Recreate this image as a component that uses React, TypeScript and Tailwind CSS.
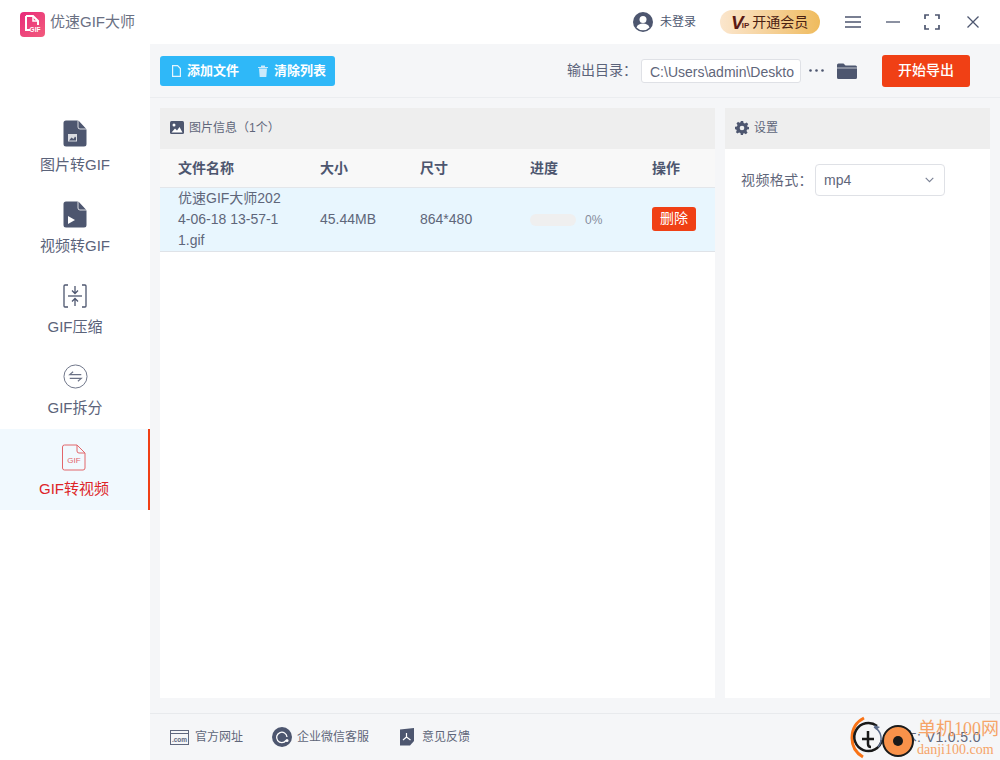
import { ReactNode } from "react";

const font = { fontFamily: '"Liberation Sans", "Noto Sans CJK SC", sans-serif' };

function FileShape({ children }: { children?: ReactNode }) {
    return (
        <svg width="24" height="27" viewBox="0 0 24 27">
            <path
                d="M3 0.5h11.5c.6 0 1 .2 1.4.6l7 7.4c.4.4.6.9.6 1.4V24a2.500 2.500 0 0 1-2.500 2.500H3A2.500 2.500 0 0 1 .5 24V3A2.500 2.500 0 0 1 3 .5z"
                fill="#4d566f"
            />
            <path d="M15 0.500v6.500a2 2 0 0 0 2 2h6.500" fill="none" stroke="#fff" strokeWidth="0.8" />
            {children}
        </svg>
    );
}

function ImageFileIcon() {
    return (
        <FileShape>
            <rect x="5" y="14" width="9" height="7.500" fill="#d9dbe1" />
            <path d="M6 20.500l2.500-3 2 1.500 1.500-2.500 1 1v3z" fill="#4d566f" />
        </FileShape>
    );
}

function VideoFileIcon() {
    return (
        <FileShape>
            <path d="M5 15l7 4-7 4z" fill="#fff" />
        </FileShape>
    );
}

function CompressIcon() {
    return (
        <svg width="24" height="24" viewBox="0 0 24 24" fill="none" stroke="#4d566f" strokeWidth="1.300">
            <path d="M5 1H2a1 1 0 0 0-1 1v20a1 1 0 0 0 1 1h3M19 1h3a1 1 0 0 1 1 1v20a1 1 0 0 1-1 1h-3" />
            <path d="M5 12h14" />
            <path d="M12 2v7M9 6.500l3 3 3-3M12 22v-7M9 17.500l3-3 3 3" />
        </svg>
    );
}

function SplitIcon() {
    return (
        <svg width="25" height="25" viewBox="0 0 26 26" fill="none" stroke="#6b7286" strokeWidth="1">
            <circle cx="13" cy="13" r="12" />
            <path d="M19 11H7l3.500-3M7 15h12l-3.500 3" strokeWidth="1.200" />
        </svg>
    );
}

function GifFileIcon() {
    return (
        <svg width="24" height="27" viewBox="0 0 24 27">
            <path
                d="M2.500 1h12.500l8 8v15a2 2 0 0 1-2 2H2.500a2 2 0 0 1-2-2V3a2 2 0 0 1 2-2z"
                fill="none"
                stroke="#e2666a"
                strokeWidth="1"
            />
            <path d="M15 1v6a2 2 0 0 0 2 2h6" fill="none" stroke="#e2666a" strokeWidth="1" />
            <text x="12" y="18.500" textAnchor="middle" fontSize="8" fill="#e2666a" style={font}>
                GIF
            </text>
        </svg>
    );
}

function AppLogo() {
    return (
        <div className="w-[25px] h-[25px] rounded-[4px] bg-gradient-to-br from-[#e8267a] to-[#f25a7c] flex items-center justify-center">
            <svg width="19" height="21" viewBox="0 0 19 21" fill="none">
                <path d="M3 2h7l5 5v4M3 2v14h4" stroke="#fff" strokeWidth="2" />
                <path d="M10 2v5h5" stroke="#fff" strokeWidth="1.500" />
                <text x="12" y="17.500" textAnchor="middle" fontSize="6.500" fontWeight="700" fill="#fff" style={font}>
                    GIF
                </text>
            </svg>
        </div>
    );
}

function SideItem({ label, icon, active }: { label: string; icon: ReactNode; active?: boolean }) {
    return (
        <div
            className={
                active
                    ? "h-[81px] flex flex-col items-center pt-[15px] bg-[#f1f9fe] border-r-2 border-[#f04015]"
                    : "h-[81px] flex flex-col items-center pt-[15px]"
            }
        >
            <div className="h-[27px] flex items-center justify-center">{icon}</div>
            <div className={active ? "mt-[7px] text-[15px] leading-[21px] text-[#de2528]" : "mt-[7px] text-[15px] leading-[21px] text-[#5b637a]"}>
                {label}
            </div>
        </div>
    );
}

function Watermark() {
    return (
        <div className="absolute right-0 bottom-0 w-[150px] h-[46px]">
            <svg className="absolute left-0 top-0" width="76" height="46" viewBox="0 0 76 46" fill="none">
                <path d="M14 4C6 8 2 15 2 24c0 9 4 15 11 19" stroke="#f97316" strokeWidth="3" />
                <path d="M27 12A14 14 0 1 0 32 26" stroke="#1a1a1a" strokeWidth="2.500" />
                <path d="M12 25h12M18 17v13c0 2 1 3 3 3" stroke="#1a1a1a" strokeWidth="2.500" />
                <path d="M24 13a13 13 0 0 1 4 20" stroke="#5b6b8a" strokeWidth="1.500" />
                <path d="M24 11l6 2-4 3z" fill="#5b6b8a" />
                <circle cx="48" cy="27" r="15" fill="#f9924a" stroke="#1a1a1a" strokeWidth="2" />
                <circle cx="48" cy="27" r="5" fill="#1a1a1a" />
            </svg>
            <div className="absolute left-[68px] top-[5px] text-[18px] leading-[20px] whitespace-nowrap text-[#f6a468]" style={{ fontFamily: '"Liberation Serif", "Noto Sans CJK SC", serif' }}>
                单机100网
            </div>
            <div className="absolute left-[67px] top-[27px] text-[14px] leading-[17px] whitespace-nowrap text-[#f6a468]" style={{ fontFamily: '"Liberation Serif", serif' }}>
                danji100.com
            </div>
        </div>
    );
}

export default function App() {
    return (
        <div className="w-[1000px] h-[760px] bg-white flex flex-col overflow-hidden" style={font}>
            <div className="h-[44px] flex items-center shrink-0">
                <div className="ml-[20px] mt-[5px]">
                    <AppLogo />
                </div>
                <div className="ml-[5px] text-[15px] text-[#6a7083]">优速GIF大师</div>
                <div className="ml-auto flex items-center">
                    <svg width="20" height="20" viewBox="0 0 20 20">
                        <circle cx="10" cy="10" r="10" fill="#4d566f" />
                        <circle cx="10" cy="7.500" r="3.500" fill="#fff" />
                        <path d="M3.500 15.500c1-3 3.500-4 6.500-4s5.500 1 6.500 4a9 9 0 0 1-13 0z" fill="#fff" />
                    </svg>
                    <span className="ml-[7px] text-[12px] text-[#4d566f]">未登录</span>
                    <div className="ml-[24px] w-[100px] h-[24px] rounded-full bg-gradient-to-r from-[#fbe6cd] to-[#efbb5c] flex items-center pl-[11px]">
                        <span className="text-[19px] leading-none font-bold italic text-[#5a1a14]">V</span>
                        <span className="ml-[-2px] text-[8px] leading-none font-bold text-[#5a1a14] mt-[8px]">IP</span>
                        <span className="ml-[3px] text-[14px] text-[#4a2012]">开通会员</span>
                    </div>
                    <svg className="ml-[25px]" width="16" height="12" viewBox="0 0 16 12" stroke="#4d566f" strokeWidth="1.300">
                        <path d="M0 1h16M0 6h16M0 11h16" />
                    </svg>
                    <svg className="ml-[25px]" width="14" height="2" viewBox="0 0 14 2" stroke="#4d566f" strokeWidth="1.300">
                        <path d="M0 1h14" />
                    </svg>
                    <svg className="ml-[24px]" width="16" height="16" viewBox="0 0 16 16" fill="none" stroke="#4d566f" strokeWidth="1.700">
                        <path d="M1 5V1h4M11 1h4v4M15 11v4h-4M5 15H1v-4" />
                    </svg>
                    <svg className="ml-[27px] mr-[21px]" width="12" height="12" viewBox="0 0 12 12" stroke="#4d566f" strokeWidth="1.300">
                        <path d="M.5.5l11 11M11.500.5l-11 11" />
                    </svg>
                </div>
            </div>

            <div className="flex flex-1 min-h-0">
                <div className="w-[150px] shrink-0 pt-[61px]">
                    <SideItem label="图片转GIF" icon={<ImageFileIcon />} />
                    <SideItem label="视频转GIF" icon={<VideoFileIcon />} />
                    <SideItem label="GIF压缩" icon={<CompressIcon />} />
                    <SideItem label="GIF拆分" icon={<SplitIcon />} />
                    <SideItem label="GIF转视频" icon={<GifFileIcon />} active />
                </div>

                <div className="flex-1 flex flex-col bg-[#f5f6f8] min-w-0">
                    <div className="h-[54px] shrink-0 flex items-center border-b border-[#ebedf0] pl-[10px]">
                        <div className="w-[175px] h-[30px] rounded-[3px] bg-[#2fb8f8] flex items-center text-[13px] font-bold text-white">
                            <svg className="ml-[12px]" width="9" height="12" viewBox="0 0 9 12" fill="none" stroke="#e3f5fe" strokeWidth="1.200">
                                <path d="M.6.600h5l2.800 3v7.800H.6z" />
                            </svg>
                            <span className="ml-[6px]">添加文件</span>
                            <svg className="ml-[19px]" width="10" height="12" viewBox="0 0 10 12" fill="#cbeafb">
                                <path d="M0 2h10v1H0zM3 .5h4V2H3zM1 3.500h8L8.300 12H1.700z" />
                            </svg>
                            <span className="ml-[6px]">清除列表</span>
                        </div>
                        <span className="ml-[232px] text-[14px] text-[#5b637a]">输出目录：</span>
                        <div className="ml-[4px] w-[160px] h-[24px] rounded-[3px] border border-[#dfe1e6] bg-white pl-[8px] text-[14px] leading-[24px] text-[#5f667a] overflow-hidden whitespace-nowrap">
                            C:\Users\admin\Deskto
                        </div>
                        <svg className="ml-[8px]" width="15" height="3" viewBox="0 0 15 3" fill="#4d566f">
                            <circle cx="1.500" cy="1.500" r="1.300" />
                            <circle cx="7.500" cy="1.500" r="1.300" />
                            <circle cx="13.500" cy="1.500" r="1.300" />
                        </svg>
                        <svg className="ml-[13px]" width="20" height="16" viewBox="0 0 20 16" fill="#4d566f">
                            <path d="M0 2a1.500 1.500 0 0 1 1.500-1.500h5L8.500 2.500h10A1.500 1.500 0 0 1 20 4v10.500a1.500 1.500 0 0 1-1.500 1.500h-17A1.500 1.500 0 0 1 0 14.500z" />
                            <path d="M0 5h20" stroke="#f5f6f8" strokeWidth="0.700" />
                        </svg>
                        <div className="ml-[25px] w-[88px] h-[32px] rounded-[3px] bg-[#f04015] flex items-center justify-center text-[14px] font-medium text-white">
                            开始导出
                        </div>
                    </div>

                    <div className="flex-1 flex gap-[10px] pl-[10px] pr-[10px] pt-[10px] pb-[15px] min-h-0">
                        <div className="w-[555px] bg-white flex flex-col">
                            <div className="h-[41px] bg-[#eeeeee] flex items-center pl-[10px] pb-[2px] text-[12px] text-[#5f667a]">
                                <svg width="14" height="13" viewBox="0 0 14 13">
                                    <rect width="14" height="13" rx="1.500" fill="#4d566f" />
                                    <circle cx="4" cy="4" r="1.500" fill="#fff" />
                                    <path d="M1.500 11.500l3.500-4 2 2 2.500-3.500 3 5.500z" fill="#fff" />
                                </svg>
                                <span className="ml-[5px]">图片信息（1个）</span>
                            </div>
                            <div className="h-[39px] bg-[#f8f8f8] border-b border-[#e3e6ea] flex items-center text-[14px] font-bold text-[#4d566f]">
                                <div className="w-[160px] pl-[18px]">文件名称</div>
                                <div className="w-[100px]">大小</div>
                                <div className="w-[110px]">尺寸</div>
                                <div className="w-[122px]">进度</div>
                                <div>操作</div>
                            </div>
                            <div className="h-[64px] bg-[#e8f6fe] border-b border-[#dfe3e8] flex items-center text-[14px] text-[#5f667a]">
                                <div className="w-[160px] pl-[18px] pr-[36px] leading-[21px] break-all">
                                    优速GIF大师2024-06-18 13-57-11.gif
                                </div>
                                <div className="w-[100px]">45.44MB</div>
                                <div className="w-[110px]">864*480</div>
                                <div className="w-[122px] flex items-center">
                                    <div className="w-[46px] h-[12px] rounded-full bg-[#efefef]"></div>
                                    <span className="ml-[9px] text-[12px] text-[#868c9c]">0%</span>
                                </div>
                                <div className="w-[44px] h-[24px] mb-[2px] rounded-[3px] bg-[#f04015] flex items-center justify-center text-[14px] text-white">
                                    删除
                                </div>
                            </div>
                        </div>

                        <div className="w-[265px] bg-white flex flex-col">
                            <div className="h-[41px] bg-[#eeeeee] flex items-center pl-[10px] pb-[2px] text-[12px] text-[#5f667a]">
                                <svg width="14" height="14" viewBox="0 0 24 24" fill="#4d566f">
                                    <path
                                        fillRule="evenodd"
                                        d="M10 0h4l.7 3.300 2.300 1 2.900-1.800 2.800 2.800-1.800 2.900 1 2.300L24 10v4l-3.300.7-1 2.300 1.800 2.900-2.800 2.800-2.900-1.800-2.300 1L14 24h-4l-.7-3.300-2.300-1-2.900 1.800-2.800-2.800L3.100 17l-1-2.300L0 14v-4l3.300-.7 1-2.300-1.800-2.900 2.800-2.800L7.200 3.100l2.300-1zM12 8a4 4 0 1 0 0 8 4 4 0 0 0 0-8z"
                                    />
                                </svg>
                                <span className="ml-[5px]">设置</span>
                            </div>
                            <div className="flex items-center pl-[16px] pt-[15px]">
                                <span className="text-[14px] text-[#5f667a] tracking-[0.4px]">视频格式：</span>
                                <div className="ml-[2px] w-[130px] h-[32px] rounded-[4px] border border-[#dfe1e6] bg-white flex items-center pl-[8px] pr-[10px] text-[14px] text-[#5f667a]">
                                    mp4
                                    <svg className="ml-auto" width="9" height="6" viewBox="0 0 9 6" fill="none" stroke="#7a8194" strokeWidth="1.100">
                                        <path d="M.7.800l3.800 3.800L8.300.8" />
                                    </svg>
                                </div>
                            </div>
                        </div>
                    </div>

                    <div className="relative h-[47px] shrink-0 border-t border-[#e8eaed] flex items-center pl-[20px] text-[12px] text-[#5f667a]">
                        <svg width="19" height="15" viewBox="0 0 19 15" fill="none" stroke="#5f677e">
                            <rect x=".5" y=".5" width="18" height="14" />
                            <path d="M.5 3.500h18" />
                            <text x="9.500" y="11.500" textAnchor="middle" fontSize="6.500" fontWeight="700" fill="#5f677e" stroke="none" style={font}>
                                .com
                            </text>
                        </svg>
                        <span className="ml-[6px]">官方网址</span>
                        <svg className="ml-[29px]" width="20" height="20" viewBox="0 0 20 20" fill="none">
                            <circle cx="10" cy="10" r="10" fill="#4d566f" />
                            <path d="M14 13.500A5.200 5.200 0 1 1 15 10" stroke="#fff" strokeWidth="1.300" />
                            <circle cx="15" cy="13.500" r="1.500" fill="#fff" />
                        </svg>
                        <span className="ml-[5px]">企业微信客服</span>
                        <svg className="ml-[31px]" width="15" height="18" viewBox="0 0 15 18">
                            <path d="M0 1.500L14 0v13l-4 4.500H0z" fill="#4d566f" />
                            <path d="M6.500 5v4M3 12l3.500-3 4 3" fill="none" stroke="#fff" strokeWidth="1.200" />
                        </svg>
                        <span className="ml-[7px]">意见反馈</span>
                        <span className="ml-auto mr-[19px] text-[14px] tracking-[0.4px] text-[#5f667a]">版本: V1.0.5.0</span>
                        <Watermark />
                    </div>
                </div>
            </div>
        </div>
    );
}
